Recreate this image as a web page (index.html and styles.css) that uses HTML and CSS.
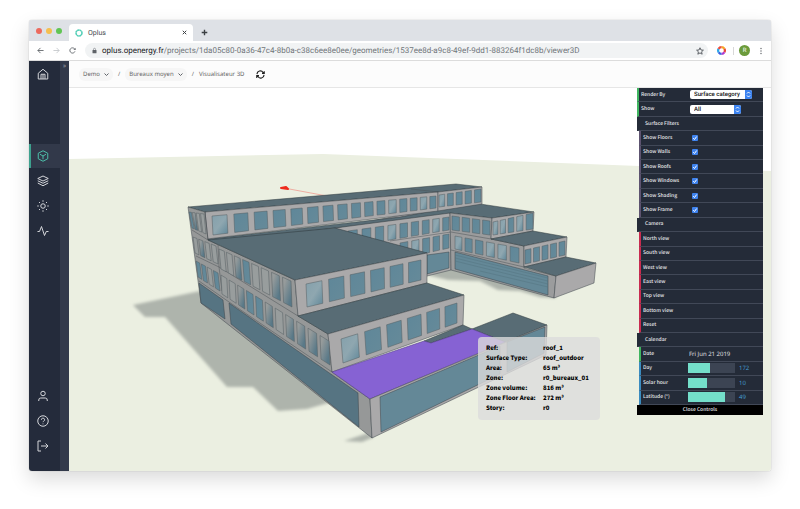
FILE: index.html
```html
<!DOCTYPE html>
<html lang="en">
<head>
    <meta charset="UTF-8">
    <meta name="viewport" content="width=device-width, initial-scale=1.0">
    <title>Oplus</title>
    <link rel="stylesheet" href="styles.css">
</head>
<body>
    <div class="browser">
        <div class="tab-bar">
            <div class="lights"><span class="red"></span><span class="yellow"></span><span class="green"></span></div>
            <div class="tab">
                <svg class="favicon" viewBox="0 0 16 16"><circle cx="8" cy="8" r="6" fill="none" stroke="#4fcdb5" stroke-width="3" stroke-dasharray="4.2 0.5"/></svg>
                <span class="tab-title">Oplus</span>
                <button class="plain" aria-label="Close tab"><svg class="icon-tiny" viewBox="0 0 10 10"><path d="M1.5 1.5l7 7M8.5 1.5l-7 7"/></svg></button>
            </div>
            <button class="plain" aria-label="New tab"><svg class="icon-plus" viewBox="0 0 10 10"><path d="M5 1v8M1 5h8"/></svg></button>
        </div>
        <div class="address-bar">
            <button class="plain" aria-label="Back"><svg class="icon-nav" viewBox="0 0 16 16"><path d="M15 8H2M8 2L2 8l6 6"/></svg></button>
            <button class="plain" aria-label="Forward"><svg class="icon-nav light" viewBox="0 0 16 16"><path d="M1 8h13M8 2l6 6-6 6"/></svg></button>
            <button class="plain" aria-label="Reload"><svg class="icon-nav" viewBox="0 0 16 16"><path d="M13.6 10A6 6 0 1 1 12.5 4l2 2"/><path d="M15 1.500v5h-5z" fill="#5f6368" stroke="none"/></svg></button>
            <div class="url">
                <svg class="icon-lock" viewBox="0 0 10 12"><rect x="1" y="5" width="8" height="6.500" rx="1" fill="#5f6368" stroke="none"/><path d="M3 5V3.500a2 2 0 0 1 4 0V5"/></svg>
                <span class="url-text"><b>oplus.openergy.fr</b>/projects/1da05c80-0a36-47c4-8b0a-c38c6ee8e0ee/geometries/1537ee8d-a9c8-49ef-9dd1-883264f1dc8b/viewer3D</span>
                <svg class="icon-star" viewBox="0 0 16 16"><path d="M8 1.500l2 4.500 4.800.4-3.700 3.200 1.200 4.800L8 11.800l-4.300 2.600 1.200-4.800L1.200 6.400 6 6z"/></svg>
            </div>
            <svg class="icon-ring" viewBox="0 0 16 16">
                <path d="M8 2a6 6 0 0 1 5.200 3" stroke="#f5a623"/>
                <path d="M13.200 5a6 6 0 0 1 0 6" stroke="#e8453c"/>
                <path d="M13.200 11A6 6 0 0 1 8 14" stroke="#b03bd0"/>
                <path d="M8 14a6 6 0 0 1-5.200-3" stroke="#3b62e0"/>
                <path d="M2.800 11a6 6 0 0 1 0-6" stroke="#2fa8e8"/>
                <path d="M2.800 5A6 6 0 0 1 8 2" stroke="#ee4a3a"/>
            </svg>
            <span class="divider"></span>
            <span class="avatar">R</span>
            <button class="plain" aria-label="Menu"><svg class="icon-dots" viewBox="0 0 4 14"><circle cx="2" cy="2" r="1.400"/><circle cx="2" cy="7" r="1.400"/><circle cx="2" cy="12" r="1.400"/></svg></button>
        </div>

        <div class="app">
            <nav class="sidebar">
                <a href="#" class="home" aria-label="Home"><svg viewBox="0 0 24 24"><path d="M2.500 10.500L12 2.500l9.500 8V22h-19z"/><path d="M8 22v-9.500h8V22M12 13v9"/></svg></a>
                <a href="#" class="active" aria-label="Geometry"><svg viewBox="0 0 24 24"><path d="M12 1.500l9.500 5v11L12 22.500l-9.500-5v-11z"/><path d="M6 8.500l6 3.500 6-3.500M12 12v6.500"/></svg></a>
                <a href="#" aria-label="Layers"><svg viewBox="0 0 24 24"><path d="M12 2l10.500 5L12 12 1.500 7z"/><path d="M1.500 11.500l10.500 5 10.500-5M1.500 16l10.500 5.500L22.500 16"/></svg></a>
                <a href="#" aria-label="Weather"><svg viewBox="0 0 24 24"><circle cx="12" cy="12" r="4.500"/><path d="M12 .5v3M12 20.500v3M.5 12h3M20.500 12h3M4 4l2 2M18 18l2 2M4 20l2-2M18 6l2-2"/></svg></a>
                <a href="#" aria-label="Results"><svg viewBox="0 0 24 24"><path d="M1 13h4L9 3l6 18 3.500-8H23"/></svg></a>
                <a href="#" class="bottom" aria-label="Account"><svg viewBox="0 0 24 24"><circle cx="12" cy="7" r="4.500"/><path d="M3.500 22v-2a4 4 0 0 1 4-4h9a4 4 0 0 1 4 4v2"/></svg></a>
                <a href="#" aria-label="Help"><svg viewBox="0 0 24 24"><circle cx="12" cy="12" r="10.500"/><path d="M8.800 9.500a3.200 3.200 0 1 1 4.700 2.800c-1 .6-1.500 1-1.500 2M12 17v1.500"/></svg></a>
                <a href="#" aria-label="Log out"><svg viewBox="0 0 24 24"><path d="M8 2H2v20h6M8 12h14M17 7l5 5-5 5"/></svg></a>
            </nav>
            <button class="expand" aria-label="Expand menu">»</button>

            <main class="content">
                <div class="breadcrumb">
                    <button class="crumb">Demo <svg viewBox="0 0 10 6"><path d="M1 1l4 4 4-4"/></svg></button>
                    <span>/</span>
                    <button class="crumb">Bureaux moyen <svg viewBox="0 0 10 6"><path d="M1 1l4 4 4-4"/></svg></button>
                    <span>/</span>
                    <span>Visualisateur 3D</span>
                    <button class="plain refresh" aria-label="Refresh"><svg viewBox="0 0 24 24"><path d="M2.500 11A9 9 0 0 1 19 6.500L22 9M22 3v6h-6M21.500 13A9 9 0 0 1 5 17.500L2 15M2 21v-6h6"/></svg></button>
                </div>

                <div class="viewer">
                    <svg class="scene" id="scene" viewBox="69 88 702 383" preserveAspectRatio="xMidYMid slice">
                        <defs>
                            <linearGradient id="glass" x1="0" y1="0" x2="1" y2="1">
                                <stop offset="0" stop-color="#5f8799"/>
                                <stop offset="1" stop-color="#668a99"/>
                            </linearGradient>
                            <linearGradient id="shine" x1="0" y1="0" x2="1" y2="1">
                                <stop offset="0" stop-color="#84a0ab"/>
                                <stop offset=".5" stop-color="#8fa7b0"/>
                                <stop offset="1" stop-color="#5f8799"/>
                            </linearGradient>
                            <linearGradient id="shineLeft" x1="0" y1="0" x2="1" y2="1">
                                <stop offset=".2" stop-color="#969b9b"/>
                                <stop offset=".8" stop-color="#597988"/>
                            </linearGradient>
                            <filter id="soft"><feGaussianBlur stdDeviation="1.500"/></filter>
                        </defs>
                        <polygon class="ground" points="0,161 69,159 323,154 771,171 900,176 900,600 0,600"/>
                        <g class="shadow" filter="url(#soft)">
                            <polygon points="133,305 200,291 372,400 328,403 307,409 278,411 253,387 227,387 165,317 145,317"/>
                            <polygon points="427,275 452,266 555,285 556,298 540,297 520,291 498,290 480,281 448,280"/>
                            <polygon points="344,441 368,433 374,437 362,442"/>
                        </g>
                        <path class="north-line" d="M284 188l43 8"/>
                        <polygon class="north" points="281,188 286,187 288,189"/>

                        <g id="back">
                            <polygon class="wall" points="335,228 438,208 450,213 451,270 427,276 400,262"/>
                            <polygon class="roof" points="207,239 400,217 438,210 480,204 534,212 492,218 450,213 335,228 216,243"/>
                            <polygon class="roof" points="188,207 456,184 482,187 438,192 205,212"/>
                            <polygon class="wall" points="205,212 438,192 438,211 207,239"/>
                            <polygon class="wall" points="438,192 482,187 482,204 438,211"/>
                            <path class="edge" d="M411 189l27 3M390 241l61-9"/>
                            <polygon class="wall side" points="450,213 492,218 491,239 524,246 524,268 556,276 554,298 451,270"/>
                            <polygon class="wall" points="492,218 534,212 533,231 491,239"/>
                            <polygon class="roof" points="491,239 533,231 567,237 524,246"/>
                            <polygon class="wall" points="524,246 567,237 566,257 524,267"/>
                            <polygon class="roof" points="524,267 566,257 596,263 556,276"/>
                            <polygon class="wall" points="556,276 596,263 594,283 554,298"/>
                            <path class="edge" d="M451 232l40 7M451 250l73 17"/>
                            <polygon class="glass" points="427,255 449,252 449,268 427,274"/>
                            <polygon class="glass" points="455,252 548,276 548,295 455,269"/>
                            <path class="slats" d="M455 255l93 23M455 258l93 23M455 261l93 23M480 271l68 16"/>
                        </g>

                        <g id="front">
                            <polygon class="wall left" points="188,207 205,212 208,240 295,280 298,316 328,334 332,372 370,399 372,438 201,303"/>
                            <path class="edge" d="M205 212l3 28M192 230l16 10M196 256l23 11 79 49M199 281l30 21 103 70M218 245l1 22 3 24"/>
                            <polygon class="glass dark" points="199,283 223,300 225,319 201,303"/>
                            <polygon class="glass dark" points="229,303 358,393 359,427 231,324"/>
                            <polygon class="roof" points="208,240 335,228 427,253 295,280"/>
                            <polygon class="wall" points="295,280 427,253 427,283 298,316"/>
                            <polygon class="roof" points="298,316 427,283 464,295 328,334"/>
                            <polygon class="wall" points="328,334 464,295 463,325 332,372"/>
                            <polygon class="roof" points="424,341 463,325 472,329 431,343"/>
                            <polygon class="roof" points="472,329 513,313 547,325 505,342"/>
                            <polygon class="roof selected" points="332,372 424,341 431,343 472,329 505,342 370,399"/>
                            <polygon class="wall" points="370,399 547,325 546,355 372,438"/>
                            <polygon class="glass" points="380,397 500,346 500,374 381,432"/>
                            <polygon class="glass" points="507,342 545,327 544,353 507,372"/>
                        </g>
                    </svg>

                    <form class="controls">
                        <div class="row green"><label for="render">Render By</label><span class="picker"><select id="render"><option>Surface category</option></select></span></div>
                        <div class="row green"><label for="show">Show</label><span class="picker short"><select id="show"><option>All</option></select></span></div>
                        <div class="row title">Surface Filters</div>
                        <div class="row sub purple"><label for="floors">Show Floors</label><input type="checkbox" id="floors" checked></div>
                        <div class="row sub purple"><label for="walls">Show Walls</label><input type="checkbox" id="walls" checked></div>
                        <div class="row sub purple"><label for="roofs">Show Roofs</label><input type="checkbox" id="roofs" checked></div>
                        <div class="row sub purple"><label for="windows">Show Windows</label><input type="checkbox" id="windows" checked></div>
                        <div class="row sub purple"><label for="shading">Show Shading</label><input type="checkbox" id="shading" checked></div>
                        <div class="row sub purple"><label for="frame">Show Frame</label><input type="checkbox" id="frame" checked></div>
                        <div class="row title">Camera</div>
                        <button type="button" class="row sub pink">North view</button>
                        <button type="button" class="row sub pink">South view</button>
                        <button type="button" class="row sub pink">West view</button>
                        <button type="button" class="row sub pink">East view</button>
                        <button type="button" class="row sub pink">Top view</button>
                        <button type="button" class="row sub pink">Bottom view</button>
                        <button type="button" class="row sub pink">Reset</button>
                        <div class="row title">Calendar</div>
                        <div class="row sub green"><label for="date">Date</label><input type="text" id="date" value="Fri Jun 21 2019"></div>
                        <div class="row sub blue"><label for="day">Day</label><input type="range" id="day" min="1" max="365" value="172" style="--fill: 47%"><output for="day">172</output></div>
                        <div class="row sub blue"><label for="hour">Solar hour</label><input type="range" id="hour" min="0" max="25" value="10" style="--fill: 40%"><output for="hour">10</output></div>
                        <div class="row sub blue"><label for="latitude">Latitude (°)</label><input type="range" id="latitude" min="-90" max="90" value="49" style="--fill: 78%"><output for="latitude">49</output></div>
                        <button type="button" class="close">Close Controls</button>
                    </form>

                    <dl class="tooltip">
                        <dt>Ref:</dt><dd>roof_1</dd>
                        <dt>Surface Type:</dt><dd>roof_outdoor</dd>
                        <dt>Area:</dt><dd>65 m³</dd>
                        <dt>Zone:</dt><dd>r0_bureaux_01</dd>
                        <dt>Zone volume:</dt><dd>816 m³</dd>
                        <dt>Zone Floor Area:</dt><dd>272 m³</dd>
                        <dt>Story:</dt><dd>r0</dd>
                    </dl>
                </div>
            </main>
        </div>
    </div>

    <script src="viewer.js"></script>
</body>
</html>
```
FILE: styles.css
```css
* {
    box-sizing: border-box;
}
body {
    margin: 0;
    padding: 20px 29px 38px;
    height: 100vh;
    background-color: #fff;
    font-family: "Noto Sans CJK SC", "Open Sans", sans-serif;
    font-size: 7px;
    line-height: 10px;
    text-rendering: geometricPrecision;
}
button, input, select {
    font: inherit;
    color: inherit;
    text-rendering: inherit;
    margin: 0;
    padding: 0;
    border: 0;
    background: none;
}
svg {
    display: block;
    fill: none;
    stroke: #5f6368;
    stroke-width: 2;
    flex: none;
}
.browser {
    display: flex;
    flex-direction: column;
    height: 100%;
    border-radius: 3px;
    overflow: hidden;
    box-shadow: 0 8px 20px rgba(0, 0, 0, 0.15), 0 0 1px rgba(0, 0, 0, 0.4);
}
.plain {
    display: flex;
    align-items: center;
}

/* browser bars */
.tab-bar {
    display: flex;
    align-items: flex-end;
    height: 21px;
    padding-left: 7px;
    background-color: #dee1e6;
    font-family: Roboto, sans-serif;
}
.tab-bar > .plain {
    height: 17px;
    margin-left: 8px;
}
.lights {
    display: flex;
    gap: 4px;
    height: 21px;
    align-items: center;
    width: 33px;
}
.lights span {
    width: 6px;
    height: 6px;
    border-radius: 50%;
}
.lights .red { background-color: #ed6a5e; }
.lights .yellow { background-color: #f5bf4f; }
.lights .green { background-color: #61c554; }
.tab {
    display: flex;
    align-items: center;
    gap: 5px;
    width: 124px;
    height: 17px;
    padding: 0 6px;
    border-radius: 4px 4px 0 0;
    background-color: #fff;
    color: #45494d;
}
.tab-title {
    flex: 1;
}
.favicon {
    width: 8px;
    height: 8px;
}
.icon-tiny {
    width: 5px;
    height: 5px;
}
.icon-plus {
    width: 7px;
    height: 7px;
}
.icon-tiny, .icon-plus {
    stroke: #3c4043;
}
.address-bar {
    display: flex;
    align-items: center;
    gap: 9px;
    height: 20px;
    padding: 0 9px 0 8px;
    background-color: #fff;
    border-bottom: 1px solid #dcdcdc;
}
.icon-nav {
    width: 7px;
    height: 7px;
}
.icon-nav.light {
    stroke: #c4c7ca;
}
.url {
    display: flex;
    align-items: center;
    flex: 1;
    gap: 5px;
    height: 15px;
    padding: 0 4px 0 7px;
    border-radius: 8px;
    background-color: #f1f3f4;
    color: #70757a;
    font-family: Roboto, sans-serif;
    font-size: 8px;
    white-space: nowrap;
    overflow: hidden;
}
.url-text {
    flex: 1;
}
.url b {
    color: #202124;
    font-weight: 400;
}
.icon-lock {
    width: 5px;
    height: 7px;
    stroke-width: 1;
}
.icon-star {
    width: 8px;
    height: 8px;
    stroke-width: 2;
}
.icon-ring {
    width: 9px;
    height: 9px;
    stroke-width: 4;
}
.icon-dots {
    width: 2px;
    height: 8px;
    fill: #5f6368;
    stroke: none;
}
.divider {
    width: 1px;
    height: 8px;
    margin: 0 -2px;
    background-color: #d8d8d8;
}
.avatar {
    width: 11px;
    height: 11px;
    margin: 0 1px 0 -2px;
    border-radius: 50%;
    background-color: #6b9b3b;
    color: #fff;
    font-family: Roboto, sans-serif;
    font-size: 6px;
    line-height: 11px;
    text-align: center;
}

/* application */
.app {
    display: flex;
    flex: 1;
    min-height: 0;
}
.sidebar {
    display: flex;
    flex-direction: column;
    gap: 1px;
    width: 31px;
    padding-bottom: 13px;
    background-color: #242b3b;
}
.sidebar a {
    display: flex;
    align-items: center;
    height: 24px;
    padding-left: 6px;
    border-left: 2px solid transparent;
}
.sidebar svg {
    width: 12px;
    height: 12px;
    stroke: #d4d6da;
}
.sidebar .home {
    margin: 1px 0 57px;
}
.sidebar .active {
    border-left-color: #3da18e;
    background-color: #32394a;
}
.sidebar .active svg {
    stroke: #4cbfa9;
}
.sidebar .bottom {
    margin-top: auto;
}
.expand {
    width: 9px;
    background-color: #32394a;
    color: #a5a9b3;
    display: flex;
    justify-content: center;
}
.content {
    display: flex;
    flex-direction: column;
    flex: 1;
    min-width: 0;
}
.breadcrumb {
    display: flex;
    align-items: center;
    gap: 5px;
    height: 27px;
    padding: 0 10px;
    border-bottom: 1px solid #e6e6e6;
    background-color: #fcfcfc;
    color: #666;
    font-family: "Noto Sans", sans-serif;
    font-size: 6px;
}
.crumb {
    display: flex;
    align-items: center;
    gap: 4px;
    height: 13px;
    padding: 0 4px;
    border-radius: 6px;
    background-color: #f6f6f6;
}
.crumb svg {
    width: 5px;
    height: 3px;
}
.refresh {
    margin-left: 7px;
}
.refresh svg {
    width: 9px;
    height: 9px;
    stroke: #222;
    stroke-width: 3;
}

/* 3D view */
.viewer {
    position: relative;
    flex: 1;
    min-height: 0;
    background-color: #fff;
}
.scene {
    width: 100%;
    height: 100%;
    stroke-width: 1;
}
.scene polygon {
    stroke: #3d454a;
    stroke-width: 0.5;
    stroke-linejoin: round;
}
.scene .ground {
    fill: #ebefe1;
    stroke: none;
}
.scene .shadow polygon {
    fill: #aeb4ac;
    stroke: none;
}
.scene .wall { fill: #aaa9aa; }
.scene .wall.side { fill: #9b9c9d; }
.scene .wall.left { fill: #969898; }
.scene .roof {
    fill: #586c75;
    stroke: #2e383d;
}
.scene .roof.selected {
    fill: #8662d3;
    stroke: #4b3580;
}
.scene .glass { fill: #648897; }
.scene .glass.dark { fill: #567482; }
.scene .window {
    fill: url(#glass);
    stroke: #555e62;
}
.scene .window.shine { fill: url(#shine); }
.scene .window.pale { fill: url(#shineLeft); }
.scene .window.blank { fill: #989d9d; }
.scene .edge {
    stroke: #4c5256;
    stroke-width: 0.5;
}
.scene .slats {
    stroke: #557481;
    stroke-width: 0.5;
}
.scene .north {
    fill: #ee2a1c;
    stroke: #ee2a1c;
    stroke-width: 2;
}
.scene .north-line {
    stroke: #ee6a60;
    stroke-width: 0.5;
}

/* controls panel */
.controls {
    position: absolute;
    top: 0;
    right: 8px;
    display: grid;
    grid-template-rows: repeat(22, 1fr) 10px;
    width: 126px;
    height: 327px;
    font-size: 5px;
    font-weight: 500;
    line-height: 8px;
    color: #e4e6e9;
}
.row {
    display: flex;
    align-items: center;
    padding-left: 2px;
    border-left: 2px solid #242b38;
    border-bottom: 1px solid #414857;
    background-color: #242b38;
    text-align: left;
}
.row.title {
    padding-left: 6px;
}
.row.sub {
    margin-left: 2px;
}
.row.green { border-left-color: #3fb560; }
.row.purple { border-left-color: #5d5370; }
.row.pink { border-left-color: #c92c50; }
.row.blue { border-left-color: #3b8cc0; }
.row label {
    width: 49px;
}
.row.sub label {
    width: 45px;
}
.row input[type="text"] {
    width: 60px;
    margin-left: 1px;
}
.picker {
    position: relative;
    width: 62px;
    height: 9px;
    border-radius: 2px;
    overflow: hidden;
}
.picker.short {
    width: 51px;
}
.picker::after {
    content: "";
    position: absolute;
    inset: 0 0 0 auto;
    width: 7px;
    background: #3c83f0 url("data:image/svg+xml,%3Csvg xmlns='http://www.w3.org/2000/svg' viewBox='0 0 7 9' fill='none' stroke='white'%3E%3Cpath d='M2 3.500L3.500 2 5 3.500M2 5.500L3.500 7 5 5.500'/%3E%3C/svg%3E") center no-repeat;
    pointer-events: none;
}
.picker select {
    display: block;
    width: 100%;
    height: 9px;
    padding: 1px 0 0 4px;
    appearance: none;
    background-color: #fff;
    color: #111;
    font-family: Roboto, sans-serif;
    font-size: 6px;
    line-height: 8px;
}
.row input[type="checkbox"] {
    width: 6px;
    height: 6px;
    margin-left: 4px;
    appearance: none;
    border-radius: 1px;
    background: #3f83ee url("data:image/svg+xml,%3Csvg xmlns='http://www.w3.org/2000/svg' viewBox='0 0 6 6' fill='none' stroke='white'%3E%3Cpath d='M1.200 3.200L2.500 4.500 4.700 1.500'/%3E%3C/svg%3E") center no-repeat;
}
.row input[type="range"] {
    width: 47px;
    height: 10px;
    appearance: none;
    background: linear-gradient(to right, #74dfca var(--fill), #3c4453 var(--fill));
}
.row input[type="range"]::-webkit-slider-thumb {
    appearance: none;
    width: 0;
}
.row output {
    margin-left: 4px;
    color: #46a0d8;
}
.row input[type="text"], .row output {
    font-family: "Open Sans", sans-serif;
    font-size: 6px;
}
.close {
    background-color: #000;
    text-align: center;
}

/* surface tooltip, drawn at the hovered surface */
.tooltip {
    position: absolute;
    left: 409px;
    top: 249px;
    display: grid;
    grid-template-columns: 51px auto;
    column-gap: 6px;
    min-width: 122px;
    margin: 0;
    padding: 6px 8px 7px;
    border-radius: 4px;
    background-color: rgba(220, 220, 220, 0.8);
    color: #000;
    font-size: 6px;
    font-weight: 900;
    white-space: nowrap;
}
.tooltip dd {
    margin: 0;
}
```
FILE: viewer.js
```javascript
const SVG_NS = 'http://www.w3.org/2000/svg';

// each facade: strip corners [top left, top right, bottom right, bottom left],
// window count, window/gap ratio, optional class per window index
const back = [
    { quad: [[212, 216], [436, 196], [436, 208], [213, 235]], count: 16, ratio: 0.68, kinds: { 0: 'shine', 11: 'shine', 14: 'shine' } },
    { quad: [[439, 195], [481, 189], [481, 202], [439, 207]], count: 5, ratio: 0.68, kinds: { 0: 'shine' } },
    { quad: [[348, 231], [449, 217], [449, 230], [348, 247]], count: 9, ratio: 0.66, kinds: { 3: 'shine', 7: 'shine' } },
    { quad: [[400, 243], [449, 234], [449, 248], [400, 259]], count: 5, ratio: 0.66, kinds: { 1: 'shine' } },
    { quad: [[452, 216], [490, 221], [490, 235], [452, 230]], count: 4, ratio: 0.72 },
    { quad: [[493, 222], [533, 213], [533, 229], [493, 235]], count: 5, ratio: 0.68, kinds: { 0: 'shine', 1: 'shine', 3: 'shine' } },
    { quad: [[455, 236], [519, 248], [519, 263], [455, 249]], count: 6, ratio: 0.7, kinds: { 0: 'shine', 3: 'shine', 4: 'shine' } },
    { quad: [[525, 250], [565, 241], [565, 255], [525, 264]], count: 5, ratio: 0.7 }
];

const front = [
    { quad: [[189, 212], [204, 214], [206, 234], [192, 228]], count: 4, ratio: 0.72, kinds: { 1: 'pale', 2: 'blank', 3: 'blank' } },
    { quad: [[193, 237], [216, 246], [218, 264], [195, 253]], count: 4, ratio: 0.7, kinds: { 0: 'blank', 1: 'pale', 2: 'blank', 3: 'blank' } },
    { quad: [[219, 249], [291, 281], [292, 307], [221, 269]], count: 8, ratio: 0.72, kinds: { 0: 'blank', 1: 'blank', 2: 'pale', 4: 'blank', 5: 'blank', 6: 'pale', 7: 'pale' } },
    { quad: [[196, 261], [218, 273], [220, 291], [198, 277]], count: 4, ratio: 0.7, kinds: { 2: 'blank' } },
    { quad: [[221, 275], [329, 341], [330, 365], [222, 294]], count: 11, ratio: 0.72, kinds: { 0: 'blank', 1: 'blank', 2: 'pale', 5: 'pale', 6: 'blank', 7: 'pale', 8: 'pale', 9: 'pale', 10: 'pale' } },
    { quad: [[306, 284], [421, 260], [421, 280], [307, 307]], count: 6, ratio: 0.7, kinds: { 0: 'shine' } },
    { quad: [[341, 339], [457, 303], [457, 323], [343, 363]], count: 6, ratio: 0.7, kinds: { 0: 'shine' } }
];

// point at t (0..1) on a-b; the end with the taller edge is nearer
const along = (a, b, heightA, heightB, t) => {
    const s = t * heightA / ((1 - t) * heightB + t * heightA);
    return [a[0] + (b[0] - a[0]) * s, a[1] + (b[1] - a[1]) * s];
};

const drawFacades = (groupId, facades) => {
    const group = document.getElementById(groupId);
    facades.forEach(({ quad, count, ratio, kinds = {} }) => {
        const [tl, tr, br, bl] = quad;
        const hl = bl[1] - tl[1];
        const hr = br[1] - tr[1];
        const step = 1 / (count - 1 + ratio);
        for (let i = 0; i < count; i++) {
            const t0 = i * step;
            const t1 = t0 + step * ratio;
            const points = [
                along(tl, tr, hl, hr, t0),
                along(tl, tr, hl, hr, t1),
                along(bl, br, hl, hr, t1),
                along(bl, br, hl, hr, t0)
            ];
            const polygon = document.createElementNS(SVG_NS, 'polygon');
            polygon.setAttribute('class', `window ${kinds[i] || ''}`);
            polygon.setAttribute('points', points.map(p => p.map(n => n.toFixed(1)).join(',')).join(' '));
            group.appendChild(polygon);
        }
    });
};

drawFacades('back', back);
drawFacades('front', front);

document.querySelectorAll('.controls input[type="range"]').forEach((slider) => {
    slider.addEventListener('input', () => {
        const part = (slider.value - slider.min) / (slider.max - slider.min);
        slider.style.setProperty('--fill', `${Math.round(part * 100)}%`);
        slider.nextElementSibling.textContent = slider.value;
    });
});
```
